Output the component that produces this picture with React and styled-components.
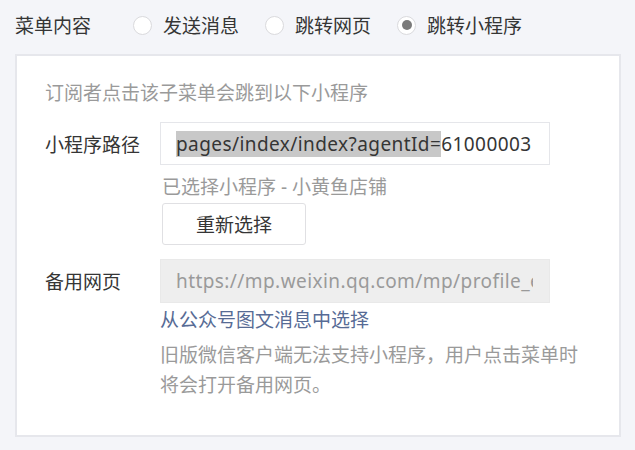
import React from "react";
import styled, { createGlobalStyle } from "styled-components";

const GlobalStyle = createGlobalStyle`
  html, body {
    margin: 0;
    padding: 0;
    background: #f4f5f9;
    font-family: "Noto Sans", "Noto Sans CJK SC", sans-serif;
    color: #353535;
  }
  * { box-sizing: border-box; }
`;

const Page = styled.div`
  width: 635px;
  height: 450px;
  background: #f4f5f9;
  padding: 0 14px 0 15px;
`;

const Header = styled.div`
  display: flex;
  align-items: center;
  height: 50px;
  font-size: 19px;
`;

const HeaderLabel = styled.span`
  width: 118px;
  color: #353535;
`;

const RadioGroup = styled.div`
  display: flex;
  align-items: center;
  gap: 26px;
`;

const RadioItem = styled.label`
  display: flex;
  align-items: center;
  gap: 11px;
  color: #353535;
`;

const RadioCircle = styled.span`
  width: 19px;
  height: 19px;
  border-radius: 50%;
  border: 1px solid #dadadd;
  background: #fff;
  display: flex;
  align-items: center;
  justify-content: center;
  &::after {
    content: "";
    width: 10px;
    height: 10px;
    border-radius: 50%;
    background: #7a7a7a;
    display: ${(p) => (p.$checked ? "block" : "none")};
  }
`;

const Panel = styled.div`
  margin-top: 4px;
  background: #fff;
  border: 2px solid #e6e7ec;
  height: 383px;
  padding: 23px 28px 0 28px;
  font-size: 19px;
`;

const Tip = styled.div`
  color: #9a9a9a;
  line-height: 28px;
  margin-bottom: 15px;
`;

const FormRow = styled.div`
  display: flex;
  align-items: flex-start;
  margin-bottom: ${(p) => p.$mb || 0}px;
`;

const Label = styled.div`
  width: 115px;
  height: 43px;
  display: flex;
  align-items: center;
  color: #353535;
  flex-shrink: 0;
`;

const Field = styled.div`
  display: flex;
  flex-direction: column;
  align-items: flex-start;
  width: 432px;
`;

const InputBox = styled.div`
  width: 390px;
  height: ${(p) => (p.$disabled ? 44 : 43)}px;
  border: 1px solid ${(p) => (p.$disabled ? "#e9e9e9" : "#e5e6ea")};
  background: ${(p) => (p.$disabled ? "#eeeeee" : "#fff")};
  color: ${(p) => (p.$disabled ? "#9a9a9a" : "#353535")};
  padding: 0 ${(p) => (p.$disabled ? 16 : 6)}px 0 15px;
  display: flex;
  align-items: center;
  white-space: nowrap;
  overflow: hidden;
  letter-spacing: 0.42px;
`;

const Clip = styled.span`
  display: block;
  overflow: hidden;
  white-space: nowrap;
  text-overflow: clip;
  width: 100%;
`;

const Selected = styled.span`
  background: #c8c8c8;
  padding: 1px 0;
`;

const Hint = styled.div`
  color: #9a9a9a;
  line-height: 28px;
  margin: 8px 0 2px 2px;
`;

const Button = styled.button`
  width: 144px;
  height: 42px;
  margin-left: 2px;
  border: 1px solid #e0e0e3;
  border-radius: 3px;
  background: #fff;
  font-family: inherit;
  font-size: 19px;
  color: #353535;
  padding: 0;
`;

const Link = styled.a`
  color: #576b95;
  line-height: 30px;
  margin-top: 2px;
  text-decoration: none;
`;

const Note = styled.div`
  color: #9a9a9a;
  line-height: 30px;
  margin-top: 5px;
`;

export default function App() {
  return (
    <>
      <GlobalStyle />
      <Page>
        <Header>
          <HeaderLabel>菜单内容</HeaderLabel>
          <RadioGroup>
            <RadioItem>
              <RadioCircle />
              发送消息
            </RadioItem>
            <RadioItem>
              <RadioCircle />
              跳转网页
            </RadioItem>
            <RadioItem>
              <RadioCircle $checked />
              跳转小程序
            </RadioItem>
          </RadioGroup>
        </Header>
        <Panel>
          <Tip>订阅者点击该子菜单会跳到以下小程序</Tip>
          <FormRow $mb={14}>
            <Label>小程序路径</Label>
            <Field>
              <InputBox>
                <Clip>
                  <Selected>pages/index/index?agentId=</Selected>61000003
                </Clip>
              </InputBox>
              <Hint>已选择小程序 - 小黄鱼店铺</Hint>
              <Button>重新选择</Button>
            </Field>
          </FormRow>
          <FormRow>
            <Label>备用网页</Label>
            <Field>
              <InputBox $disabled>
                <Clip>https://mp.weixin.qq.com/mp/profile_ext?action=home</Clip>
              </InputBox>
              <Link href="#">从公众号图文消息中选择</Link>
              <Note>旧版微信客户端无法支持小程序，用户点击菜单时将会打开备用网页。</Note>
            </Field>
          </FormRow>
        </Panel>
      </Page>
    </>
  );
}
